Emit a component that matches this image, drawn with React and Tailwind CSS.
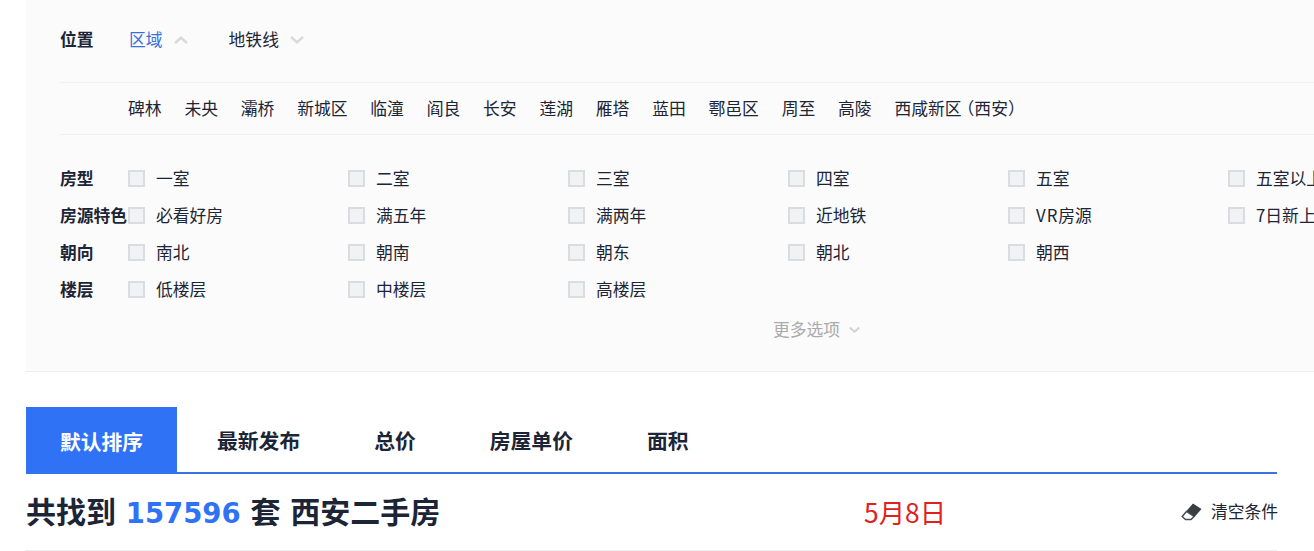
import React from "react";

const cjk = { fontFamily: '"Noto Sans CJK SC", "Noto Sans", sans-serif' };

function Chevron({ up, className }) {
  return (
    <svg width="14" height="8" viewBox="0 0 14 8" className={className} fill="none" stroke="currentColor" strokeWidth="2.6">
      <path d={up ? "M1 7 L7 1.8 L13 7" : "M1 1 L7 6.2 L13 1"} />
    </svg>
  );
}

function Check({ text }) {
  return (
    <div className="flex items-center w-[220px] shrink-0">
      <span className="w-[17px] h-[17px] border-2 border-[#dadcdf] bg-[#f1f2f4] shrink-0" />
      <span className="ml-[11px] pt-[1px] whitespace-nowrap">{text}</span>
    </div>
  );
}

const rows = [
  ["房型", ["一室", "二室", "三室", "四室", "五室", "五室以上"]],
  ["房源特色", ["必看好房", "满五年", "满两年", "近地铁", <><span className="tracking-[1px]">VR</span>房源</>, "7日新上"]],
  ["朝向", ["南北", "朝南", "朝东", "朝北", "朝西"]],
  ["楼层", ["低楼层", "中楼层", "高楼层"]],
];

const areas = ["碑林", "未央", "灞桥", "新城区", "临潼", "阎良", "长安", "莲湖", "雁塔", "蓝田", "鄠邑区", "周至", "高陵"];

export default function App() {
  return (
    <div className="w-[1314px] h-[551px] overflow-hidden bg-white text-[16.8px] text-[#1c2536]" style={cjk}>
      <div className="ml-[26px] w-[1288px] h-[372px] bg-[#fbfbfb] border-b border-[#eeeeee] pl-[34px]">
        <div className="h-[83px] border-b border-[#f0f0f0] flex items-center pb-[3px]">
          <span className="w-[68px] font-bold">位置</span>
          <span className="text-[#3a70dc] ml-[1px]">区域</span>
          <Chevron up className="ml-[11px] text-[#d8dadc]" />
          <span className="ml-[41px]">地铁线</span>
          <Chevron className="ml-[11px] text-[#d8dadc]" />
        </div>
        <div className="h-[52px] border-b border-[#f0f0f0] flex items-center pl-[68px] pt-[1px] gap-x-[22.8px] whitespace-nowrap">
          {areas.map((a) => (
            <span key={a}>{a}</span>
          ))}
          <span>
            西咸新区<span className="ml-[-4px]">（西安）</span>
          </span>
        </div>
        <div className="pt-[25px]">
          {rows.map(([label, items]) => (
            <div key={label} className="h-[37px] flex items-center">
              <span className="w-[68px] pt-[1px] shrink-0 font-bold whitespace-nowrap">{label}</span>
              {items.map((t, i) => (
                <Check key={i} text={t} />
              ))}
            </div>
          ))}
        </div>
        <div className="h-[42px] flex items-center pl-[713px] pt-[1px] text-[#aaaaaa]">
          <span>更多选项</span>
          <Chevron className="ml-[9px] w-[11px] text-[#d4d4d4]" />
        </div>
      </div>

      <div className="ml-[26px] w-[1251px] mt-[35px]">
        <div className="h-[67px] border-b-2 border-[#3673e4] flex items-stretch text-[20.8px] font-bold">
          <div className="w-[151px] h-[66px] bg-[#3072f6] text-white flex items-center justify-center pt-[4px]">默认排序</div>
          <div className="flex items-center ml-[40px] gap-x-[74px] pt-[2px]">
            <span>最新发布</span>
            <span>总价</span>
            <span>房屋单价</span>
            <span>面积</span>
          </div>
        </div>
        <div className="h-[77px] border-b border-[#eeeeee] flex items-center">
          <div className="w-[838px] shrink-0 text-[30px] font-bold whitespace-nowrap [word-spacing:3px] pb-[2px]">
            共找到 <span className="text-[#3072f6] text-[27.5px]" style={{ fontFamily: '"DejaVu Sans", sans-serif' }}>157596</span> 套 西安二手房
          </div>
          <div className="w-[317px] shrink-0 text-[26.4px] text-[#e0201c]">5月8日</div>
          <div className="ml-auto flex items-center">
            <svg width="21" height="18" viewBox="0 0 21 18" className="mr-[9px]">
              <path d="M12 0.5 L20.5 6 L13.5 14 L5 8.5 Z" fill="#3a3d42" />
              <path d="M5.5 8.5 L13 13.5 L10 16.5 L4.5 16.5 L1.2 13.5 Z" fill="#ffffff" stroke="#4a4d52" strokeWidth="1.5" />
            </svg>
            <span className="whitespace-nowrap">清空条件</span>
          </div>
        </div>
      </div>
    </div>
  );
}
